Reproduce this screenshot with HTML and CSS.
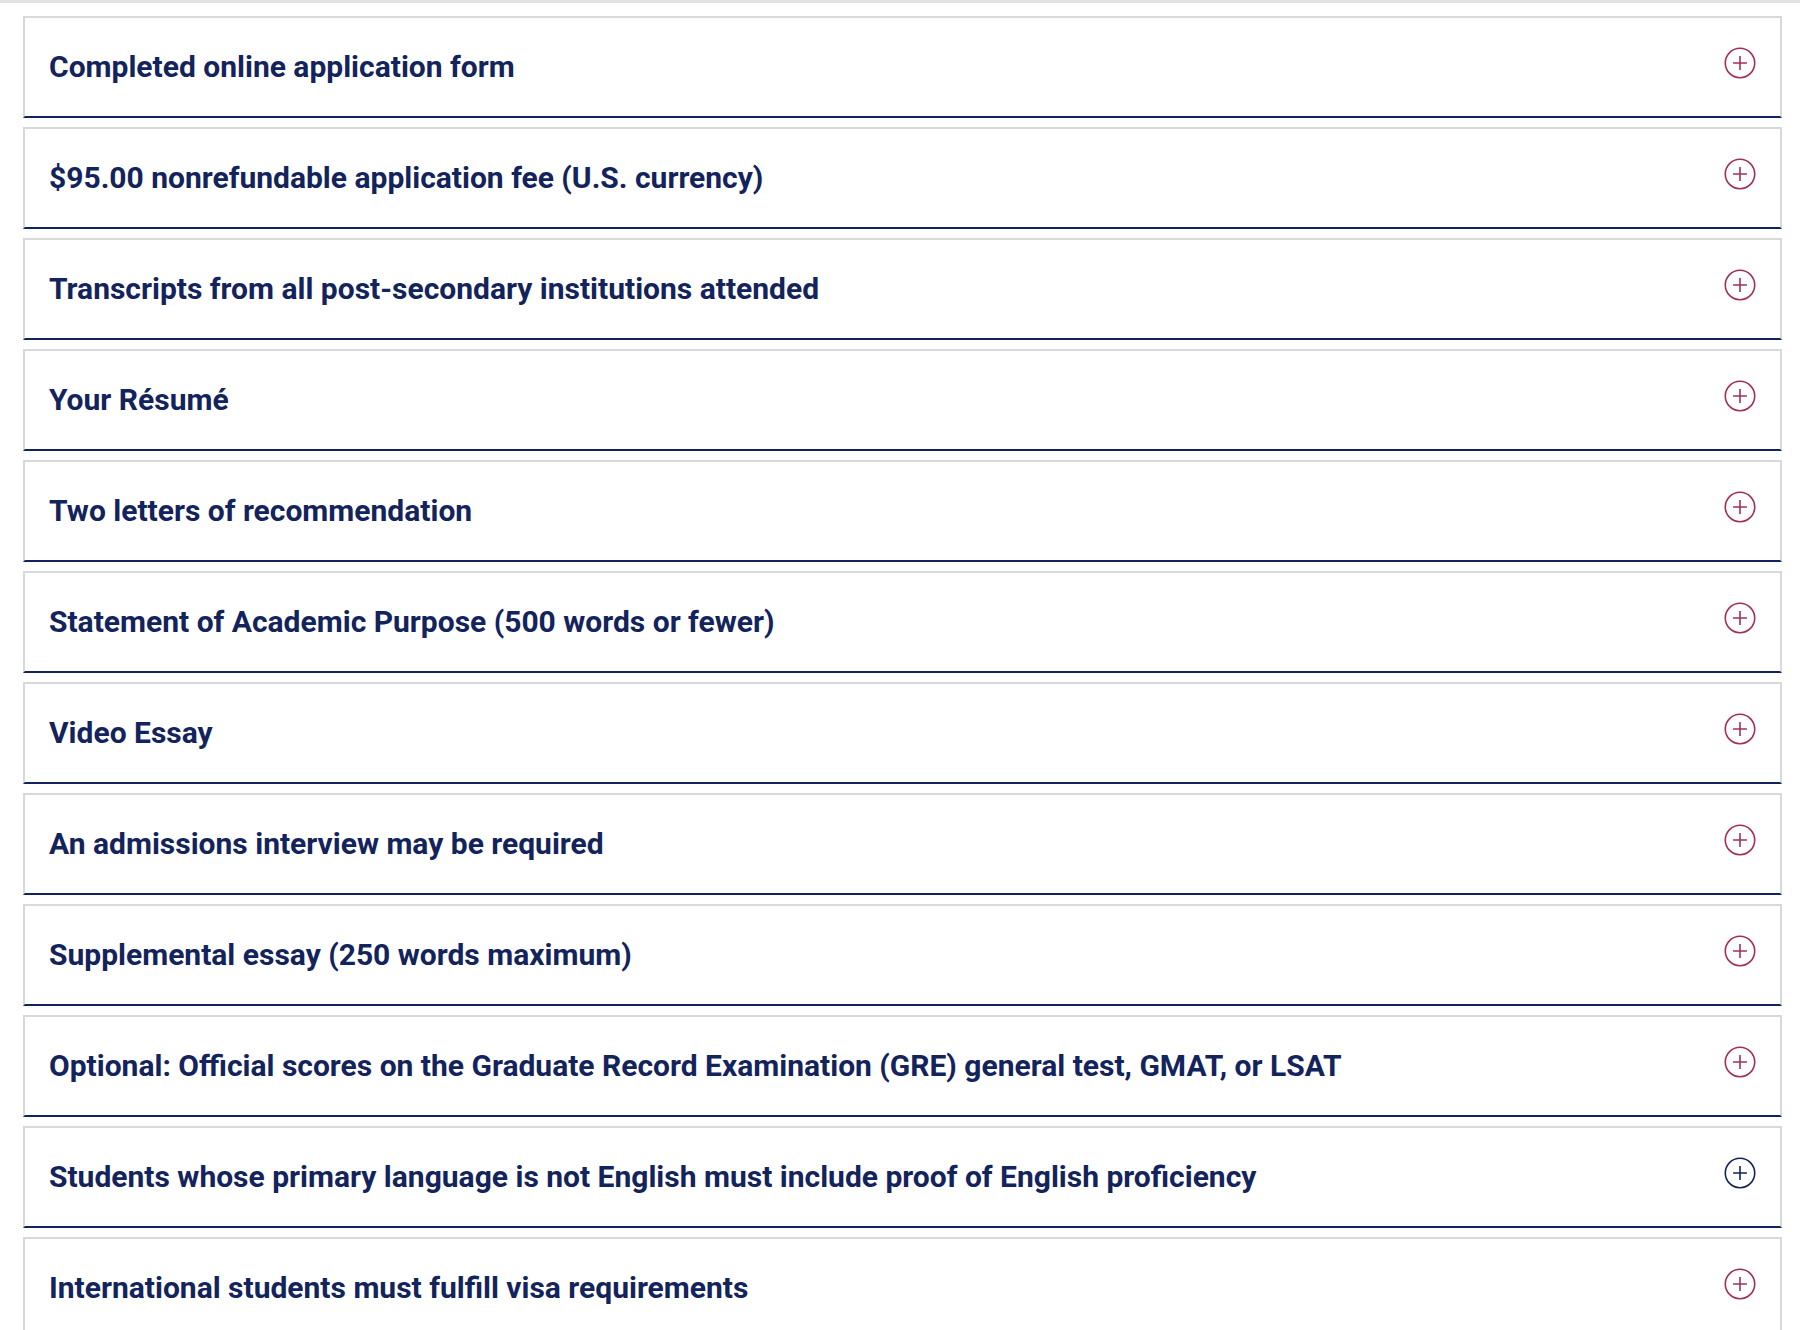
FILE: index.html
```html
<!DOCTYPE html>
<html lang="en">
<head>
    <meta charset="UTF-8">
    <title>Application Requirements</title>
    <link rel="stylesheet" href="styles.css">
</head>
<body>
    <div class="requirements">
        <div class="item">
            <h3>Completed online application form</h3>
            <svg class="toggle" viewBox="0 0 30 30"><circle cx="15" cy="15" r="13.8"/><path d="M15 8.5v13M8.5 15h13"/></svg>
        </div>
        <div class="item">
            <h3>$95.00 nonrefundable application fee (U.S. currency)</h3>
            <svg class="toggle" viewBox="0 0 30 30"><circle cx="15" cy="15" r="13.8"/><path d="M15 8.5v13M8.5 15h13"/></svg>
        </div>
        <div class="item">
            <h3>Transcripts from all post-secondary institutions attended</h3>
            <svg class="toggle" viewBox="0 0 30 30"><circle cx="15" cy="15" r="13.8"/><path d="M15 8.5v13M8.5 15h13"/></svg>
        </div>
        <div class="item">
            <h3>Your Résumé</h3>
            <svg class="toggle" viewBox="0 0 30 30"><circle cx="15" cy="15" r="13.8"/><path d="M15 8.5v13M8.5 15h13"/></svg>
        </div>
        <div class="item">
            <h3>Two letters of recommendation</h3>
            <svg class="toggle" viewBox="0 0 30 30"><circle cx="15" cy="15" r="13.8"/><path d="M15 8.5v13M8.5 15h13"/></svg>
        </div>
        <div class="item">
            <h3>Statement of Academic Purpose (500 words or fewer)</h3>
            <svg class="toggle" viewBox="0 0 30 30"><circle cx="15" cy="15" r="13.8"/><path d="M15 8.5v13M8.5 15h13"/></svg>
        </div>
        <div class="item">
            <h3>Video Essay</h3>
            <svg class="toggle" viewBox="0 0 30 30"><circle cx="15" cy="15" r="13.8"/><path d="M15 8.5v13M8.5 15h13"/></svg>
        </div>
        <div class="item">
            <h3>An admissions interview may be required</h3>
            <svg class="toggle" viewBox="0 0 30 30"><circle cx="15" cy="15" r="13.8"/><path d="M15 8.5v13M8.5 15h13"/></svg>
        </div>
        <div class="item">
            <h3>Supplemental essay (250 words maximum)</h3>
            <svg class="toggle" viewBox="0 0 30 30"><circle cx="15" cy="15" r="13.8"/><path d="M15 8.5v13M8.5 15h13"/></svg>
        </div>
        <div class="item">
            <h3>Optional: Official scores on the Graduate Record Examination (GRE) general test, GMAT, or LSAT</h3>
            <svg class="toggle" viewBox="0 0 30 30"><circle cx="15" cy="15" r="13.8"/><path d="M15 8.5v13M8.5 15h13"/></svg>
        </div>
        <div class="item hover">
            <h3>Students whose primary language is not English must include proof of English proficiency</h3>
            <svg class="toggle" viewBox="0 0 30 30"><circle cx="15" cy="15" r="13.8"/><path d="M15 8.5v13M8.5 15h13"/></svg>
        </div>
        <div class="item">
            <h3>International students must fulfill visa requirements</h3>
            <svg class="toggle" viewBox="0 0 30 30"><circle cx="15" cy="15" r="13.8"/><path d="M15 8.5v13M8.5 15h13"/></svg>
        </div>
    </div>
</body>
</html>
```

FILE: styles.css
```css
body {
    margin: 0;
    font-family: Roboto, "Liberation Sans", sans-serif;
    background: #fff;
}
.requirements {
    border-top: 3px solid #e2e2e2;
    padding: 13px 18px 0 23px;
}
.item {
    display: flex;
    align-items: center;
    justify-content: space-between;
    height: 98px;
    padding: 0 24px;
    margin-bottom: 9px;
    border: 2px solid #d9d9d9;
    border-bottom: 2px solid #13245c;
}
.item h3 {
    margin: 0 0 1px;
    font-size: 30px;
    font-weight: 700;
    color: #13235b;
}
.toggle {
    width: 32px;
    height: 32px;
    margin-bottom: 8px;
    fill: none;
    stroke: #a32f58;
    stroke-width: 1.5;
}
.item.hover .toggle {
    stroke: #13235b;
}
```
